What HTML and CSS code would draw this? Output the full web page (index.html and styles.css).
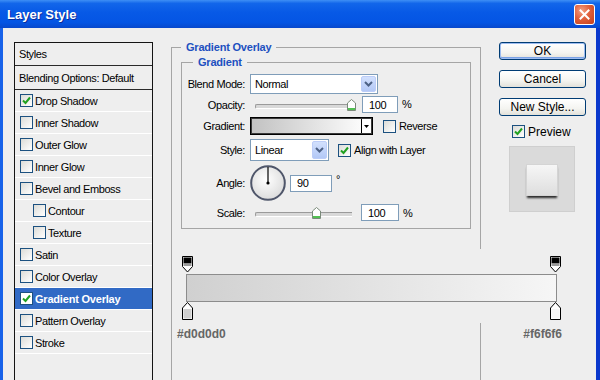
FILE: index.html
```html
<!DOCTYPE html>
<html lang="en">
<head>
    <meta charset="UTF-8" />
    <title>Layer Style</title>
    <link rel="stylesheet" href="styles.css">
</head>
<body>
<div class="window">
    <div class="titlebar">
        <span class="title">Layer Style</span>
        <span class="close">
            <svg width="11" height="11" viewBox="0 0 11 11"><path d="M1.5 1.5 L9.5 9.5 M9.5 1.5 L1.5 9.5" stroke="#fff" stroke-width="2" stroke-linecap="square"/></svg>
        </span>
    </div>

    <div class="client">
        <ul class="styles-list">
            <li class="head">Styles</li>
            <li class="blend">Blending Options: Default</li>
            <li><span class="cb on"><svg width="11" height="11" viewBox="0 0 11 11"><path d="M2 5.5 L4.5 8 L9 2.5" fill="none" stroke="#21a121" stroke-width="2"/></svg></span>Drop Shadow</li>
            <li><span class="cb"></span>Inner Shadow</li>
            <li><span class="cb"></span>Outer Glow</li>
            <li><span class="cb"></span>Inner Glow</li>
            <li><span class="cb"></span>Bevel and Emboss</li>
            <li class="sub"><span class="cb"></span>Contour</li>
            <li class="sub"><span class="cb"></span>Texture</li>
            <li><span class="cb"></span>Satin</li>
            <li><span class="cb"></span>Color Overlay</li>
            <li class="selected"><span class="cb on"><svg width="11" height="11" viewBox="0 0 11 11"><path d="M2 5.5 L4.5 8 L9 2.5" fill="none" stroke="#21a121" stroke-width="2"/></svg></span>Gradient Overlay</li>
            <li><span class="cb"></span>Pattern Overlay</li>
            <li><span class="cb"></span>Stroke</li>
        </ul>

        <div class="main">
            <fieldset class="group outer">
                <legend>Gradient Overlay</legend>
                <fieldset class="group inner">
                    <legend>Gradient</legend>

                    <div class="row r-blend">
                        <span class="lbl">Blend Mode:</span>
                        <div class="select wide">
                            <span>Normal</span>
                            <span class="drop"><svg width="9" height="6" viewBox="0 0 9 6"><path d="M1 1 L4.5 4.5 L8 1" fill="none" stroke="#4d6185" stroke-width="2"/></svg></span>
                        </div>
                    </div>

                    <div class="row r-opacity">
                        <span class="lbl">Opacity:</span>
                        <div class="slider">
                            <span class="thumb t-opacity"><svg width="9" height="12" viewBox="0 0 9 12"><path d="M0.5 11.5 V4 L4.5 0.5 L8.5 4 V11.5 Z" fill="#fff" stroke="#7a8a7a"/><rect x="1" y="9" width="7" height="2" fill="#52c152"/></svg></span>
                        </div>
                        <span class="num">100</span>
                        <span class="unit">%</span>
                    </div>

                    <div class="row r-gradient">
                        <span class="lbl">Gradient:</span>
                        <div class="swatch">
                            <span class="swatch-fill"></span>
                            <span class="swatch-arrow"><svg width="5" height="3" viewBox="0 0 5 3"><path d="M0 0 H5 L2.5 3 Z" fill="#000"/></svg></span>
                        </div>
                        <span class="cb gap-reverse"></span>
                        <span class="cb-label">Reverse</span>
                    </div>

                    <div class="row r-style">
                        <span class="lbl">Style:</span>
                        <div class="select narrow">
                            <span>Linear</span>
                            <span class="drop"><svg width="9" height="6" viewBox="0 0 9 6"><path d="M1 1 L4.5 4.5 L8 1" fill="none" stroke="#4d6185" stroke-width="2"/></svg></span>
                        </div>
                        <span class="cb on gap-align"><svg width="11" height="11" viewBox="0 0 11 11"><path d="M2 5.5 L4.5 8 L9 2.5" fill="none" stroke="#21a121" stroke-width="2"/></svg></span>
                        <span class="cb-label">Align with Layer</span>
                    </div>

                    <div class="row r-angle">
                        <span class="lbl">Angle:</span>
                        <span class="dial">
                            <svg width="36" height="36" viewBox="0 0 36 36">
                                <defs>
                                    <radialGradient id="dialFill" cx="45%" cy="40%" r="60%">
                                        <stop offset="0" stop-color="#ffffff"/>
                                        <stop offset="1" stop-color="#dcdcdc"/>
                                    </radialGradient>
                                </defs>
                                <circle cx="18" cy="18" r="16.8" fill="url(#dialFill)" stroke="#4f566a" stroke-width="2"/>
                                <path d="M18 18 V2" stroke="#000" stroke-width="1.2"/>
                                <circle cx="18" cy="18" r="1.6" fill="#000"/>
                            </svg>
                        </span>
                        <span class="num angle">90</span>
                        <span class="unit deg">°</span>
                    </div>

                    <div class="row r-scale">
                        <span class="lbl">Scale:</span>
                        <div class="slider">
                            <span class="thumb t-scale"><svg width="9" height="12" viewBox="0 0 9 12"><path d="M0.5 11.5 V4 L4.5 0.5 L8.5 4 V11.5 Z" fill="#fff" stroke="#7a8a7a"/><rect x="1" y="9" width="7" height="2" fill="#52c152"/></svg></span>
                        </div>
                        <span class="num scale">100</span>
                        <span class="unit">%</span>
                    </div>
                </fieldset>
            </fieldset>
        </div>

        <div class="actions">
            <span class="btn default">OK</span>
            <span class="btn">Cancel</span>
            <span class="btn">New Style...</span>
            <div class="preview-row">
                <span class="cb on"><svg width="11" height="11" viewBox="0 0 11 11"><path d="M2 5.5 L4.5 8 L9 2.5" fill="none" stroke="#21a121" stroke-width="2"/></svg></span>
                <span class="preview-label">Preview</span>
            </div>
            <div class="preview-box">
                <span class="preview-square"></span>
            </div>
        </div>

        <!-- gradient editor strip laid over the dialog -->
        <div class="grad-editor">
            <div class="ge-canvas">
                <div class="ge-stops">
                    <svg width="11" height="17" viewBox="0 0 11 17"><path d="M0.5 0.5 H10.5 V10.5 L5.5 16 L0.5 10.5 Z" fill="#fff" stroke="#000"/><rect x="1.5" y="1.5" width="8" height="6" fill="#000"/><rect x="1.5" y="7.5" width="8" height="2.5" fill="#9a9a9a"/></svg>
                    <svg width="11" height="17" viewBox="0 0 11 17"><path d="M0.5 0.5 H10.5 V10.5 L5.5 16 L0.5 10.5 Z" fill="#fff" stroke="#000"/><rect x="1.5" y="1.5" width="8" height="6" fill="#000"/><rect x="1.5" y="7.5" width="8" height="2.5" fill="#9a9a9a"/></svg>
                </div>
                <div class="ge-bar"></div>
                <div class="ge-stops">
                    <svg width="11" height="18" viewBox="0 0 11 18"><path d="M5.5 0.5 L10.5 6 V17.5 H0.5 V6 Z" fill="#fff" stroke="#000"/><rect x="1.5" y="7" width="8" height="9.5" fill="#d0d0d0"/></svg>
                    <svg width="11" height="18" viewBox="0 0 11 18"><path d="M5.5 0.5 L10.5 6 V17.5 H0.5 V6 Z" fill="#fff" stroke="#000"/><rect x="1.5" y="7" width="8" height="9.5" fill="#f6f6f6"/></svg>
                </div>
            </div>
            <div class="ge-labels">
                <span>#d0d0d0</span>
                <span>#f6f6f6</span>
            </div>
        </div>
    </div>
</div>
</body>
</html>
```

FILE: styles.css
```css
* {
    box-sizing: border-box;
}
body {
    margin: 0;
    width: 600px;
    height: 380px;
    overflow: hidden;
    font-family: "Liberation Sans", Arial, sans-serif;
    font-size: 11px;
    letter-spacing: -0.4px;
    color: #000;
    background: #eeeeee;
}
.window {
    position: relative;
    width: 600px;
    height: 380px;
    overflow: hidden;
    background: #eeeeee;
}
.titlebar {
    height: 28px;
    display: flex;
    align-items: center;
    justify-content: space-between;
    padding: 0 5px 0 7px;
    background: linear-gradient(to bottom, #3e8ff5 0%, #1266ea 12%, #0759e6 45%, #0455e4 80%, #0748cc 100%);
}
.title {
    color: #fff;
    font-size: 13px;
    font-weight: bold;
    letter-spacing: 0;
    text-shadow: 1px 1px 0 #0b2f9c;
    margin-top: 1px;
}
.close {
    width: 21px;
    height: 21px;
    border: 1px solid #fff;
    border-radius: 3px;
    display: flex;
    align-items: center;
    justify-content: center;
    background: radial-gradient(circle at 35% 30%, #f3a084 0%, #e0603c 45%, #c2401c 100%);
}

.client {
    display: flex;
    align-items: flex-start;
    height: 352px;
    overflow: hidden;
    padding-left: 11px;
    border-left: 3px solid #1862e9;
    border-right: 4px solid #0a38cc;
}

/* styles list */
.styles-list {
    list-style: none;
    margin: 14px 0 0;
    padding: 0;
    width: 139px;
    height: 360px;
    flex: none;
    border: 1px solid #141414;
    background: #eeeeee;
}
.styles-list li {
    height: 22px;
    display: flex;
    align-items: center;
    padding-left: 5px;
    border-bottom: 1px solid #ffffff;
}
.styles-list li.head {
    height: 23px;
    padding-left: 4px;
    border-bottom: 1px solid #2a2a2a;
}
.styles-list li.blend {
    height: 24px;
    padding-left: 4px;
    border-bottom: 1px solid #2a2a2a;
}
.styles-list li.sub {
    padding-left: 18px;
}
.styles-list li .cb {
    margin-right: 2px;
}
.styles-list li.selected {
    background: #316ac5;
    color: #fff;
    font-weight: bold;
    letter-spacing: -0.2px;
}

/* checkbox */
.cb {
    width: 13px;
    height: 13px;
    flex: none;
    display: inline-flex;
    align-items: center;
    justify-content: center;
    border: 1px solid #1c5180;
    background: linear-gradient(135deg, #dcdcd7, #ffffff);
}
.selected .cb {
    background: #fff;
}
.cb-label {
    margin-left: 3px;
}

/* main column */
.main {
    margin: 12px 0 0 18px;
    flex: none;
}
.group {
    margin: 0;
    min-width: 0;
    border: 1px solid #a5a5a5;
}
.group legend {
    padding: 0 5px;
    line-height: 14px;
    font-weight: bold;
    color: #2150c0;
    letter-spacing: -0.2px;
}
.outer {
    width: 310px;
    height: 420px;
    padding: 1px 9px 0;
}
.inner {
    width: 290px;
    padding: 5px 0 6px;
}
.inner legend {
    margin-left: 11px;
}
.row {
    display: flex;
    align-items: center;
}
.r-blend { height: 20px; }
.r-opacity { height: 21px; }
.r-gradient { height: 22px; }
.r-style { height: 26px; }
.r-angle { height: 40px; }
.r-scale { height: 19px; }
.lbl {
    width: 63px;
    margin-right: 5px;
    text-align: right;
    flex: none;
}

.select {
    display: flex;
    align-items: center;
    justify-content: space-between;
    border: 1px solid #7f9db9;
    background: #fff;
    padding-left: 4px;
}
.select.wide {
    width: 128px;
    height: 20px;
}
.select.narrow {
    width: 79px;
    height: 22px;
}
.drop {
    width: 15px;
    align-self: stretch;
    margin: 1px;
    display: flex;
    align-items: center;
    justify-content: center;
    border: 1px solid #bccdf8;
    border-radius: 2px;
    background: linear-gradient(to bottom, #d2e0fd, #b3c8f6);
}

.slider {
    position: relative;
    width: 97px;
    height: 12px;
    margin-left: 5px;
    flex: none;
}
.slider::before {
    content: "";
    position: absolute;
    left: 0;
    right: 0;
    top: 5px;
    height: 3px;
    border-top: 1px solid #9a9a9a;
    border-bottom: 1px solid #fff;
    border-left: 1px solid #9a9a9a;
    border-radius: 2px 0 0 2px;
    background: #d8d8d8;
}
.thumb {
    position: absolute;
    top: 0;
    width: 9px;
    height: 12px;
    display: flex;
}
.t-opacity { left: 92px; }
.t-scale { left: 57px; }

.num {
    width: 36px;
    height: 17px;
    margin-left: 10px;
    padding-left: 6px;
    display: flex;
    align-items: center;
    border: 1px solid #7f9db9;
    background: #fff;
    flex: none;
}
.num.angle {
    width: 42px;
    margin-left: 4px;
}
.num.scale {
    width: 38px;
    margin-left: 9px;
}
.unit {
    margin-left: 4px;
    align-self: flex-start;
    margin-top: 4px;
}
.unit.deg {
    margin-top: 10px;
}

.swatch {
    width: 123px;
    height: 18px;
    display: flex;
    border: 1px solid #000;
    box-shadow: inset 0 0 0 1px #3a3a3a;
    flex: none;
}
.swatch-fill {
    flex: 1;
    margin: 1px 0 1px 1px;
    background: linear-gradient(to right, #c2c2c2, #fbfbfb);
}
.swatch-arrow {
    width: 10px;
    display: flex;
    align-items: center;
    justify-content: center;
    border-left: 1px solid #000;
    background: #fff;
    margin: 1px 1px 1px 0;
}
.gap-reverse {
    margin-left: 10px;
}
.gap-align {
    margin-left: 9px;
}

.dial {
    width: 36px;
    height: 36px;
    display: flex;
    flex: none;
}

/* buttons column */
.actions {
    margin: 14px 0 0 18px;
    width: 87px;
    flex: none;
    display: flex;
    flex-direction: column;
}
.btn {
    height: 18px;
    margin-bottom: 10px;
    display: flex;
    align-items: center;
    justify-content: center;
    font-size: 12px;
    letter-spacing: 0;
    border: 1px solid #003c74;
    border-radius: 3px;
    background: linear-gradient(to bottom, #ffffff, #f4f4f0 60%, #e2e1da);
}
.btn.default {
    box-shadow: inset 0 0 0 1px #9dbcf0, inset 0 -1px 0 1px #7aa2e6;
}
.preview-row {
    display: flex;
    align-items: center;
    height: 13px;
    margin-top: -1px;
    padding-left: 13px;
}
.preview-label {
    margin-left: 3px;
    font-size: 12px;
    letter-spacing: 0;
}
.preview-box {
    width: 66px;
    height: 66px;
    margin: 8px 0 0 10px;
    display: flex;
    align-items: center;
    justify-content: center;
    padding-top: 2px;
    border: 1px solid #cfcfcf;
    background: #dadada;
}
.preview-square {
    width: 32px;
    height: 32px;
    border: 1px solid #d4d4d4;
    background: linear-gradient(to bottom, #f6f6f6, #dedede);
    box-shadow: 0 3px 2px -1px #2a2a2a;
}

/* gradient editor */
.grad-editor {
    position: absolute;
    left: 172px;
    top: 249px;
    width: 406px;
}
.ge-canvas {
    height: 74px;
    padding: 7px 0 0 10px;
    background: #eeeeee;
}
.ge-stops {
    width: 379px;
    display: flex;
    justify-content: space-between;
}
.ge-stops svg {
    display: block;
}
.ge-bar {
    width: 371px;
    height: 28px;
    margin: 1px 0 0 4px;
    border: 1px solid #8c8c8c;
    background: linear-gradient(to right, #d0d0d0, #f6f6f6);
}
.ge-labels {
    width: 390px;
    display: flex;
    justify-content: space-between;
    padding-left: 5px;
    margin-top: 4px;
    font-size: 12px;
    font-weight: bold;
    letter-spacing: 0;
    color: #666;
}
```
